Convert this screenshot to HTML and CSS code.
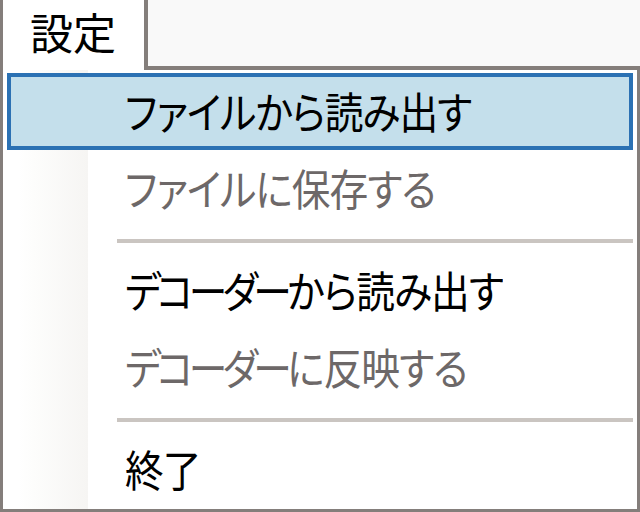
FILE: index.html
```html
<!DOCTYPE html>
<html lang="ja">
<head>
<meta charset="utf-8">
<link rel="stylesheet" href="styles.css">
</head>
<body>
<div class="frame">
  <div class="bar">
    <div class="tab"><span class="tab-label">設定</span></div>
    <div class="bar-rest"></div>
  </div>
  <div class="menu">
    <div class="item active"><span class="label">ファイルから読み出す</span></div>
    <div class="item disabled"><span class="label">ファイルに保存する</span></div>
    <div class="sep"></div>
    <div class="item"><span class="label"><span class="tight">デコーダー</span>から読み出す</span></div>
    <div class="item disabled"><span class="label"><span class="tight">デコーダー</span>に反映する</span></div>
    <div class="sep"></div>
    <div class="item"><span class="label">終了</span></div>
  </div>
</div>
</body>
</html>
```
FILE: styles.css
```css
html, body {
  margin: 0;
  padding: 0;
  background: #ffffff;
}
body {
  width: 640px;
  height: 512px;
  overflow: hidden;
  font-family: "Noto Sans CJK JP", "Noto Sans", sans-serif;
  font-feature-settings: "palt";
  color: #000;
}
.frame {
  box-sizing: border-box;
  width: 640px;
  height: 512px;
  border-left: 3px solid #847e7b;
  display: flex;
  flex-direction: column;
}
.bar {
  display: flex;
  height: 70px;
  flex: none;
}
.tab {
  width: 145px;
  height: 70px;
  box-sizing: border-box;
  border-right: 4px solid #847e7b;
  background: #ffffff;
  display: flex;
  align-items: flex-start;
  padding: 0 0 0 27px;
}
.tab-label {
  font-size: 43px;
  line-height: 62px;
  display: inline-block;
}
.bar-rest {
  flex: 1;
  background: #f9f9f9;
  border-bottom: 4px solid #847e7b;
}
.menu {
  flex: 1;
  box-sizing: border-box;
  border-right: 3px solid #847e7b;
  border-bottom: 3px solid #847e7b;
  padding: 3px 4px 0 4px;
  background:
    linear-gradient(to right, #ffffff 0px, #ffffff 15px, #fdfdfc 30px, #f6f5f3 85px, #ffffff 85px) no-repeat;
  background-size: 100% 100%;
}
.item {
  height: 77px;
  box-sizing: border-box;
  border: 4px solid transparent;
  display: flex;
  align-items: center;
  padding-left: 114px;
}
.item.active {
  background: #c4dfeb;
  border-color: #2b71b3;
}
.label {
  display: inline-block;
  font-size: 43px;
  line-height: 50px;
  letter-spacing: -1px;
  margin-top: -4px;
  white-space: nowrap;
  transform: scaleX(0.9);
  transform-origin: left center;
}
.tight {
  letter-spacing: -5px;
}
.item.disabled .label {
  color: #6d6868;
}
.sep {
  height: 25px;
  box-sizing: border-box;
  padding: 12px 0 0 110px;
}
.sep::before {
  content: "";
  display: block;
  height: 4px;
  background: #cac5c1;
}
```
